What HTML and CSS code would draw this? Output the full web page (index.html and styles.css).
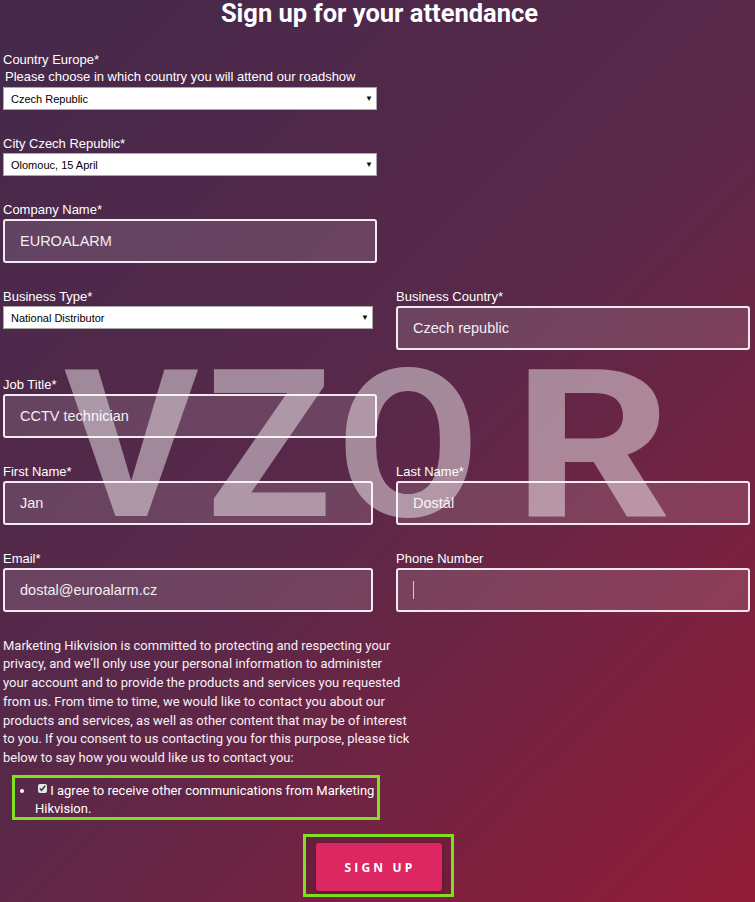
FILE: index.html
```html
<!DOCTYPE html>
<html>
<head>
<meta charset="utf-8">
<title>Sign up for your attendance</title>
<link rel="stylesheet" href="styles.css">
</head>
<body>
<div id="page">
    <h1>Sign up for your attendance</h1>
    <form id="signup">
        <div class="field">
            <label>Country Europe*</label>
            <div class="hint">Please choose in which country you will attend our roadshow</div>
            <div class="select wide">
                <select><option>Czech Republic</option></select>
            </div>
        </div>
        <div class="field">
            <label>City Czech Republic*</label>
            <div class="select wide">
                <select><option>Olomouc, 15 April</option></select>
            </div>
        </div>
        <div class="field">
            <label>Company Name*</label>
            <input class="text wide" type="text" value="EUROALARM">
        </div>
        <div class="row">
            <div class="field">
                <label>Business Type*</label>
                <div class="select">
                    <select><option>National Distributor</option></select>
                </div>
            </div>
            <div class="field">
                <label>Business Country*</label>
                <input class="text" type="text" value="Czech republic">
            </div>
        </div>
        <div class="field">
            <label>Job Title*</label>
            <input class="text wide" type="text" value="CCTV technician">
        </div>
        <div class="row">
            <div class="field">
                <label>First Name*</label>
                <input class="text" type="text" value="Jan">
            </div>
            <div class="field">
                <label>Last Name*</label>
                <input class="text" type="text" value="Dostál">
            </div>
        </div>
        <div class="row">
            <div class="field">
                <label>Email*</label>
                <input class="text" type="text" value="dostal@euroalarm.cz">
            </div>
            <div class="field">
                <label>Phone Number</label>
                <div class="phone">
                    <input class="text" type="text" value="">
                    <span class="caret"></span>
                </div>
            </div>
        </div>
        <p class="legal">Marketing Hikvision is committed to protecting and respecting your<br>privacy, and we’ll only use your personal information to administer<br>your account and to provide the products and services you requested<br>from us. From time to time, we would like to contact you about our<br>products and services, as well as other content that may be of interest<br>to you. If you consent to us contacting you for this purpose, please tick<br>below to say how you would like us to contact you:</p>
        <div class="mark consent">
            <ul>
                <li><input type="checkbox" checked> I agree to receive other communications from Marketing Hikvision.</li>
            </ul>
        </div>
        <div class="submit">
            <div class="mark">
                <button type="button">SIGN UP</button>
            </div>
        </div>
    </form>
    <div class="stamp">VZO<span>R</span></div>
</div>
</body>
</html>
```

FILE: styles.css
```css
*{
    margin: 0;
    padding: 0;
    box-sizing: border-box;
}
html, body{
    height: 100%;
}
body{
    background: linear-gradient(135deg, #44294b 0%, #5a2849 50%, #931c38 100%);
    color: #fff;
    font-family: "Liberation Sans", Arial, sans-serif;
    font-size: 13px;
    overflow: hidden;
}
#page{
    position: relative;
    width: 755px;
    height: 902px;
}
h1{
    font-family: Roboto, "Liberation Sans", sans-serif;
    font-weight: 700;
    font-size: 25.5px;
    line-height: 30px;
    margin-top: -2px;
    text-align: center;
    padding-left: 4px;
}
#signup{
    padding: 24px 0 0 3px;
}
.field{
    margin-bottom: 26px;
}
.field label{
    display: block;
    line-height: 15px;
    margin-bottom: 2px;
}
.hint{
    line-height: 15px;
    padding-left: 2px;
    margin: 1px 0 3px;
}
.row{
    display: grid;
    grid-template-columns: 370px 354px;
    column-gap: 23px;
}
.row .field{
    margin-bottom: 26.5px;
}
.select{
    position: relative;
    width: 100%;
    height: 23px;
    background: #fff;
    border: 1px solid #a9a9a9;
}
.select select{
    appearance: none;
    -webkit-appearance: none;
    width: 100%;
    height: 21px;
    border: 0;
    background: transparent;
    font-family: "Liberation Sans", Arial, sans-serif;
    font-size: 11px;
    color: #000;
    padding-left: 7px;
    outline: none;
}
.select::after{
    content: "▼";
    position: absolute;
    right: 3px;
    top: 6px;
    font-size: 8px;
    color: #111;
    pointer-events: none;
}
.wide{
    width: 374px;
}
.text{
    display: block;
    width: 100%;
    height: 44px;
    border: 2px solid #f2eaf0;
    border-radius: 3px;
    background: rgba(255,255,255,0.13);
    color: #f4eef2;
    font-family: "Liberation Sans", Arial, sans-serif;
    font-size: 14.5px;
    padding-left: 15px;
    outline: none;
}
.text.wide{
    width: 374px;
}
.phone{
    position: relative;
}
.caret{
    position: absolute;
    left: 17px;
    top: 13px;
    width: 1px;
    height: 18px;
    background: #d8c8d0;
}
.legal{
    font-family: Roboto, "Liberation Sans", sans-serif;
    font-size: 13px;
    line-height: 18.8px;
    width: 430px;
    margin-top: -2px;
    color: #f6f0f4;
}
.mark{
    border: 3px solid #7ee11f;
}
.consent{
    width: 368px;
    height: 45px;
    margin: 7px 0 0 9px;
    padding: 4px 0 0 0;
}
.consent ul{
    padding-left: 20px;
    font-family: Roboto, "Liberation Sans", sans-serif;
    font-size: 13px;
    line-height: 18px;
}
.consent input{
    width: 9px;
    height: 9px;
    margin: 0 0 0 3px;
    accent-color: #e6e6e6;
    vertical-align: 2px;
}
.submit{
    display: flex;
    justify-content: center;
    margin-top: 14px;
    padding-right: 2px;
}
.submit .mark{
    width: 151px;
    height: 63px;
    padding: 6px 9px 0 10px;
    background: rgba(40,10,30,0.12);
}
.submit button{
    display: block;
    width: 126px;
    height: 48px;
    border: 0;
    border-radius: 3px;
    background: #dc2762;
    color: #fff;
    font-family: "Open Sans", "Liberation Sans", sans-serif;
    font-weight: 700;
    font-size: 12px;
    letter-spacing: 3.2px;
    padding-left: 3px;
    box-shadow: 0 2px 4px rgba(0,0,0,0.2);
}
.stamp{
    position: absolute;
    left: 64px;
    top: 328px;
    font-family: Roboto, "Liberation Sans", sans-serif;
    font-weight: 700;
    font-size: 206px;
    line-height: 240px;
    letter-spacing: 8px;
    color: rgba(255,255,255,0.45);
    pointer-events: none;
}
.stamp span{
    display: inline-block;
    margin-left: 26px;
    transform: scaleX(1.2);
    transform-origin: left center;
}
```
